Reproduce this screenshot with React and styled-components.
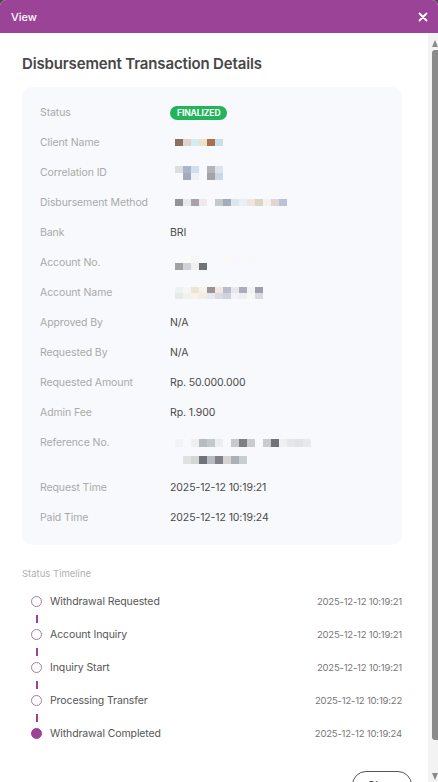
import React from "react";
import styled, { createGlobalStyle } from "styled-components";

const Global = createGlobalStyle`
  html, body {
    margin: 0;
    padding: 0;
    background: #4b4b4b;
  }
  body {
    font-family: "Inter", "Noto Sans", sans-serif;
  }
  * { box-sizing: border-box; }
`;

const Modal = styled.div`
  width: 438px;
  height: 782px;
  display: flex;
  flex-direction: column;
  background: #ffffff;
  border-radius: 6px 6px 0 0;
  overflow: hidden;
`;

const Header = styled.div`
  height: 33px;
  flex: none;
  display: flex;
  align-items: center;
  justify-content: space-between;
  padding: 0 10px 0 11px;
  background: #9b4397;
  color: #fff;
  font-size: 11px;
  font-weight: 500;
`;

const CloseX = styled.button`
  border: 0;
  background: none;
  padding: 0;
  display: flex;
  color: #fff;
  cursor: pointer;
`;

const Main = styled.div`
  flex: 1;
  min-height: 0;
  display: flex;
`;

const Body = styled.div`
  flex: 1;
  min-width: 0;
  overflow: hidden;
`;

const Rail = styled.div`
  flex: none;
  width: 10px;
  display: flex;
  flex-direction: column;
  align-items: flex-end;
  padding: 7px 0 2px;
  background: #f3f3f3;
`;

const Arrow = styled.span`
  width: 0;
  height: 0;
  border-left: 3px solid transparent;
  border-right: 3px solid transparent;
  ${(p) =>
    p.$down
      ? "border-top: 7px solid #8a8a8a; margin-top: 33px;"
      : "border-bottom: 7px solid #8a8a8a;"}
`;

const Thumb = styled.span`
  flex: 1;
  width: 6px;
  margin-top: 3px;
  background: #8a8a8a;
  border-radius: 3px 0 0 3px;
`;

const Content = styled.div`
  padding: 21px 26px 0 22px;
`;

const Title = styled.h2`
  margin: 0 0 13px;
  font-size: 15px;
  line-height: 20px;
  font-weight: 600;
  color: #474747;
  letter-spacing: -0.15px;
`;

const Card = styled.div`
  background: #f8f9fc;
  border-radius: 10px;
  padding: 11px 18px 12px;
`;

const Row = styled.div`
  display: grid;
  grid-template-columns: 130px 1fr;
  align-items: start;
  padding: 8px 0;
  font-size: 10.5px;
  line-height: 14px;
`;

const Label = styled.div`
  color: #a9a9a9;
  letter-spacing: -0.1px;
`;

const Value = styled.div`
  color: #4a4a4a;
  letter-spacing: -0.1px;
`;

const Badge = styled.span`
  display: inline-block;
  background: #22b45a;
  color: #fff;
  font-size: 8.5px;
  font-weight: 700;
  line-height: 14px;
  padding: 0 7px;
  border-radius: 8px;
  letter-spacing: -0.1px;
  vertical-align: middle;
`;

const MosaicWrap = styled.div`
  display: flex;
  flex-direction: column;
  gap: ${(p) => p.$gap || 0}px;
  padding: ${(p) => p.$offset || 0}px 0 ${(p) => p.$after || 0}px 5px;
`;

const MosaicLine = styled.div`
  display: flex;
  height: ${(p) => p.$h}px;
`;

const Cell = styled.span`
  width: ${(p) => p.$w}px;
  height: 100%;
  background: ${(p) => p.$c};
`;

const Mosaic = ({ rows, w = 8, h = 7, gap = 0, offset = 0, after = 0 }) => (
  <MosaicWrap $gap={gap} $offset={offset} $after={after}>
    {rows.map((r, i) => (
      <MosaicLine key={i} $h={h}>
        {r.map((c, j) => (
          <Cell key={j} $w={w} $c={c || "transparent"} />
        ))}
      </MosaicLine>
    ))}
  </MosaicWrap>
);

const SectionLabel = styled.div`
  margin: 22px 0 0;
  font-size: 9.5px;
  line-height: 14px;
  color: #b0b0b0;
`;

const Timeline = styled.div`
  padding: 15px 0 0 9px;
  display: flex;
  flex-direction: column;
`;

const Step = styled.div`
  display: flex;
  align-items: center;
  height: 10px;
`;

const Dot = styled.span`
  flex: none;
  width: 11px;
  height: 11px;
  border-radius: 50%;
  border: 1.5px solid;
  background: ${(p) => (p.$done ? "#9b4397" : "#fff")};
  border-color: ${(p) => (p.$done ? "#9b4397" : "#a978a7")};
`;

const StepName = styled.span`
  margin-left: 8px;
  flex: 1;
  font-size: 10.5px;
  color: #555;
  letter-spacing: -0.1px;
`;

const StepTime = styled.span`
  font-size: 9.5px;
  color: #777;
  letter-spacing: -0.2px;
`;

const Connector = styled.div`
  height: 23px;
  position: relative;
  &::after {
    content: "";
    position: absolute;
    left: 4.5px;
    top: 9px;
    width: 2px;
    height: 8px;
    background: #9b4397;
  }
`;

const Footer = styled.div`
  display: flex;
  justify-content: flex-end;
  padding: 33px 16px 20px 22px;
`;

const Button = styled.button`
  border: 1px solid #555;
  background: #fff;
  border-radius: 14px;
  height: 28px;
  width: 60px;
  font-family: inherit;
  font-size: 11px;
  color: #444;
`;

const details = [
  { label: "Status", badge: "FINALIZED" },
  {
    label: "Client Name",
    mosaic: { rows: [["#8a7060", "#e2d3ca", "#d4edf2", "#ece2c9", "#a96f52", "#c9dee9"]], offset: 3 },
  },
  {
    label: "Correlation ID",
    mosaic: {
      rows: [
        ["#dedede", "#aab5cc", "#d2deec", "", "#b3b3ba", "#dbe3ec"],
        ["", "#a3abba", "#eef1f5", "", "#a3a3aa", "#cad6e2"],
      ],
      h: 7,
      offset: 0,
    },
  },
  {
    label: "Disbursement Method",
    mosaic: {
      rows: [
        ["#929299", "#e9e9ed", "#aaa2aa", "#f1e9e9", "", "#c3caca", "#a4abbb", "#dde5f1", "#eaeef5", "#ede6de", "#dcd4c5", "#f5f1f1", "#e3d4d4", "#bac2d9"],
      ],
      offset: 3,
    },
  },
  { label: "Bank", value: "BRI" },
  {
    label: "Account No.",
    mosaic: {
      rows: [
        ["", "#fafafa", "#f6f6f6", "", "", "", "#fbf8f8", "#f8f8fa", "", "#f8f8f8"],
        ["#a2a2a2", "#d2d2da", "#f0f0f0", "#727279"],
      ],
      offset: 0,
    },
  },
  {
    label: "Account Name",
    mosaic: {
      rows: [
        ["#eef2f0", "#f6f6f4", "#ede3d6", "#f6f2ea", "#9b9592", "#f2e8e0", "#b9bccb", "#e6e8ee", "#abadbb", "#f2f2f4", "#9c9fb2"],
        ["#e4ebe8", "#f3f1ec", "#f7f1ea", "#f1ece6", "#e7e8f1", "#dcd9e3", "#cfd3dd", "#f3f3f5", "#eeeef2", "#f6f6f7", "#d8d9e2"],
      ],
      h: 6,
      offset: 1,
    },
  },
  { label: "Approved By", value: "N/A" },
  { label: "Requested By", value: "N/A" },
  { label: "Requested Amount", value: "Rp. 50.000.000" },
  { label: "Admin Fee", value: "Rp. 1.900" },
  {
    label: "Reference No.",
    mosaic: {
      rows: [
        ["#f3f3f3", "", "#eef0f0", "#b7bcbe", "#c4c9cb", "#eceeee", "", "#c7cacc", "#7c7f84", "#c9cccf", "", "#c9cbd0", "#707278", "#eef0f2", "#e4e6e8", "#e1e3e5", "#e8e9eb"],
        ["", "#dfe2e0", "#d3d8d6", "#707378", "#b7babe", "#7f8088", "#d6d3d2", "#aab2b8", "#c7cdd1"],
      ],
      h: 8,
      gap: 9,
      offset: 3,
      after: 1,
    },
  },
  { label: "Request Time", value: "2025-12-12 10:19:21" },
  { label: "Paid Time", value: "2025-12-12 10:19:24" },
];

const steps = [
  { name: "Withdrawal Requested", time: "2025-12-12 10:19:21" },
  { name: "Account Inquiry", time: "2025-12-12 10:19:21" },
  { name: "Inquiry Start", time: "2025-12-12 10:19:21" },
  { name: "Processing Transfer", time: "2025-12-12 10:19:22" },
  { name: "Withdrawal Completed", time: "2025-12-12 10:19:24", done: true },
];

export default function App() {
  return (
    <>
      <Global />
      <Modal>
        <Header>
          <span>View</span>
          <CloseX aria-label="close">
            <svg width="10" height="10" viewBox="0 0 10 10">
              <path d="M1.5 1.5 L8.5 8.5 M8.5 1.5 L1.5 8.5" stroke="#fff" strokeWidth="1.8" strokeLinecap="round" />
            </svg>
          </CloseX>
        </Header>
        <Main>
          <Body>
            <Content>
              <Title>Disbursement Transaction Details</Title>
              <Card>
                {details.map((d) => (
                  <Row key={d.label}>
                    <Label>{d.label}</Label>
                    <Value>
                      {d.badge && <Badge>{d.badge}</Badge>}
                      {d.value}
                      {d.mosaic && <Mosaic {...d.mosaic} />}
                    </Value>
                  </Row>
                ))}
              </Card>
              <SectionLabel>Status Timeline</SectionLabel>
              <Timeline>
                {steps.map((s, i) => (
                  <React.Fragment key={s.name}>
                    {i > 0 && <Connector />}
                    <Step>
                      <Dot $done={s.done} />
                      <StepName>{s.name}</StepName>
                      <StepTime>{s.time}</StepTime>
                    </Step>
                  </React.Fragment>
                ))}
              </Timeline>
            </Content>
            <Footer>
              <Button>Close</Button>
            </Footer>
          </Body>
          <Rail>
            <Arrow />
            <Thumb />
            <Arrow $down />
          </Rail>
        </Main>
      </Modal>
    </>
  );
}
